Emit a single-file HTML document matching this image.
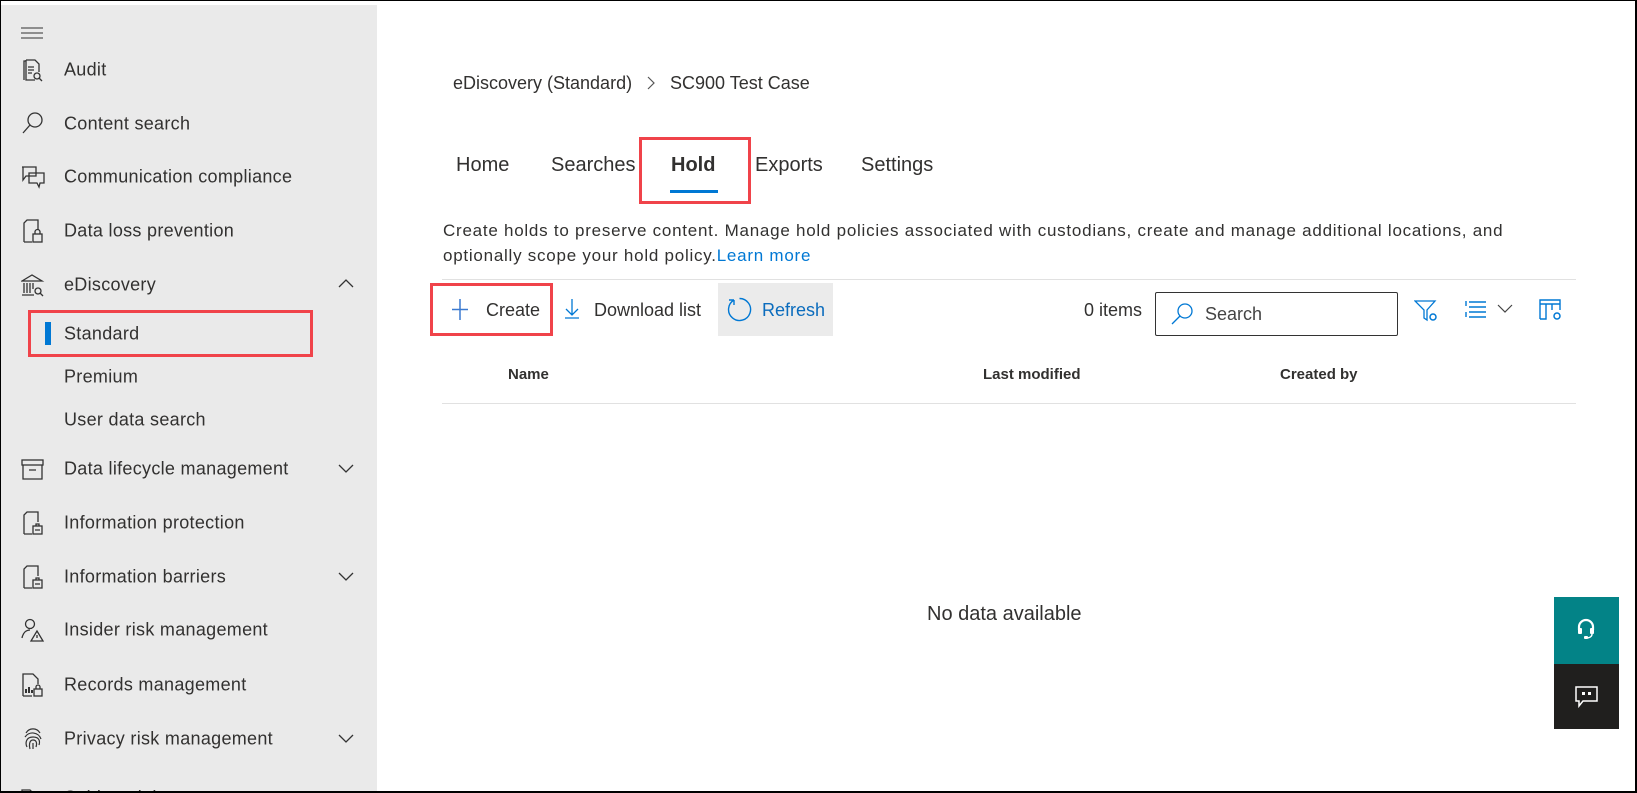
<!DOCTYPE html>
<html><head><meta charset="utf-8"><style>
*{margin:0;padding:0;box-sizing:border-box}
html{width:1637px;height:793px;overflow:hidden}
body{width:1637px;height:793px;overflow:hidden;background:#fff;font-family:"Liberation Sans",Arial,sans-serif;color:#323130;position:relative}
.frame{position:absolute;left:0;top:0;width:1637px;height:793px;border:1px solid #000;border-width:1px 2px 2px 1px;z-index:10;pointer-events:none}
.side{position:absolute;left:1px;top:5px;width:376px;height:788px;background:#eaeaea}
.it{position:absolute;left:64px;font-size:18px;letter-spacing:0.3px;white-space:nowrap;transform:translateY(-50%)}
.ic{position:absolute;left:21px;transform:translateY(-50%)}
.chev{position:absolute;left:338px;transform:translateY(-50%)}
.a{position:absolute;white-space:nowrap}
.red{position:absolute;border:3px solid #f0434a}
</style></head><body>
<div class="frame"></div>
<div class="side"></div>
<svg class="a" style="left:21px;top:27px" width="23" height="12"><path d="M0 1h22M0 6h22M0 11h22" stroke="#333" stroke-width="1"/></svg>

<svg class="ic" style="top:70px" width="24" height="24" viewBox="0 0 24 24" fill="none" stroke="#333" stroke-width="1.3"><path d="M3 22V3h2M5 2h9l4 4v8M5 2v20h9"/><path d="M7 9h6M7 12h6M7 15h4"/><circle cx="16" cy="18" r="3"/><path d="M18 20l3 3"/></svg>
<div class="it" style="top:70px">Audit</div>
<svg class="ic" style="top:123px" width="24" height="24" viewBox="0 0 24 24" fill="none" stroke="#333" stroke-width="1.3"><circle cx="14" cy="9" r="7"/><path d="M9 14L2 22"/></svg>
<div class="it" style="top:124px">Content search</div>
<svg class="ic" style="top:177px" width="24" height="24" viewBox="0 0 24 24" fill="none" stroke="#333" stroke-width="1.3"><path d="M1 2h14v9H5l-3 4V2"/><path d="M8 8h15v10h-4l-1 4-2-4H8z"/></svg>
<div class="it" style="top:177px">Communication compliance</div>
<svg class="ic" style="top:231px" width="24" height="24" viewBox="0 0 24 24" fill="none" stroke="#333" stroke-width="1.3"><path d="M3 23V4l3-3h11v10M3 23h8"/><rect x="12" y="15" width="9" height="8"/><path d="M14 15v-2a2.5 2.5 0 015 0v2"/></svg>
<div class="it" style="top:231px">Data loss prevention</div>
<svg class="ic" style="top:285px" width="24" height="24" viewBox="0 0 24 24" fill="none" stroke="#333" stroke-width="1.3"><path d="M1 8l10-6 10 6zM3 10v10M6 10v10M9 10v10M12 10v6M1 22h12"/><circle cx="17" cy="18" r="3"/><path d="M19 20l3 3"/></svg>
<div class="it" style="top:285px">eDiscovery</div>
<svg class="chev" style="top:283px" width="16" height="10"><path d="M1 9l7-7 7 7" stroke="#333" fill="none" stroke-width="1.3"/></svg>

<div class="red" style="left:28px;top:310px;width:285px;height:47px"></div>
<div class="a" style="left:45px;top:322px;width:6px;height:23px;background:#0078d4"></div>
<div class="it" style="top:334px">Standard</div>
<div class="it" style="top:377px">Premium</div>
<div class="it" style="top:420px">User data search</div>

<svg class="ic" style="top:469px" width="24" height="24" viewBox="0 0 24 24" fill="none" stroke="#333" stroke-width="1.3"><rect x="1" y="3" width="21" height="5"/><path d="M2 8v14h19V8M8 13h7"/></svg>
<div class="it" style="top:469px">Data lifecycle management</div>
<svg class="chev" style="top:469px" width="16" height="10"><path d="M1 1l7 7 7-7" stroke="#333" fill="none" stroke-width="1.3"/></svg>
<svg class="ic" style="top:523px" width="24" height="24" viewBox="0 0 24 24" fill="none" stroke="#333" stroke-width="1.3"><path d="M3 23V4l3-3h11v10M3 23h8"/><rect x="12" y="15" width="9" height="8"/><path d="M14 19h5M15 15v-2h3v2"/></svg>
<div class="it" style="top:523px">Information protection</div>
<svg class="ic" style="top:577px" width="24" height="24" viewBox="0 0 24 24" fill="none" stroke="#333" stroke-width="1.3"><path d="M3 23V4l3-3h11v10M3 23h8"/><rect x="12" y="15" width="9" height="8"/><path d="M14 19h5M15 15v-2h3v2"/></svg>
<div class="it" style="top:577px">Information barriers</div>
<svg class="chev" style="top:577px" width="16" height="10"><path d="M1 1l7 7 7-7" stroke="#333" fill="none" stroke-width="1.3"/></svg>
<svg class="ic" style="top:630px" width="24" height="24" viewBox="0 0 24 24" fill="none" stroke="#333" stroke-width="1.3"><circle cx="9" cy="6" r="4.5"/><path d="M1 20c1-5 4-8 8-8M16 13l-6 10h12z M16 17v3"/></svg>
<div class="it" style="top:630px">Insider risk management</div>
<svg class="ic" style="top:685px" width="24" height="24" viewBox="0 0 24 24" fill="none" stroke="#333" stroke-width="1.3"><path d="M2 23V1h10l5 5v5M2 23h9"/><path d="M5 20v-4M8 20v-6M11 20v-3" stroke-width="2"/><rect x="13" y="16" width="8" height="7"/><path d="M15 16v-2a2 2 0 014 0v2"/></svg>
<div class="it" style="top:685px">Records management</div>
<svg class="ic" style="top:739px" width="24" height="24" viewBox="0 0 24 24" fill="none" stroke="#333" stroke-width="1.2"><path d="M5 6a8 8 0 0114 0M4 10a9 9 0 0116 2M6 20c-2-4-1-10 6-10s7 5 6 8M9 22c-1-3-1-9 3-9s4 4 3 7M12 16v6"/></svg>
<div class="it" style="top:739px">Privacy risk management</div>
<svg class="chev" style="top:739px" width="16" height="10"><path d="M1 1l7 7 7-7" stroke="#333" fill="none" stroke-width="1.3"/></svg>
<svg class="ic" style="top:798px" width="24" height="24" viewBox="0 0 24 24" fill="none" stroke="#333" stroke-width="1.3"><path d="M1 4h8l2 2h11v16H1z"/></svg>
<div class="it" style="top:798px">Subject rights requests</div>

<div class="a" style="left:453px;top:73px;font-size:18px">eDiscovery (Standard)</div>
<svg class="a" style="left:647px;top:76px" width="9" height="14"><path d="M1 1l6 6-6 6" stroke="#555" fill="none" stroke-width="1.2"/></svg>
<div class="a" style="left:670px;top:73px;font-size:18px">SC900 Test Case</div>

<div class="a" style="left:456px;top:154px;font-size:20px">Home</div>
<div class="a" style="left:551px;top:154px;font-size:20px">Searches</div>
<div class="a" style="left:671px;top:154px;font-size:20px;font-weight:bold">Hold</div>
<div class="a" style="left:670px;top:190px;width:48px;height:3px;background:#0078d4"></div>
<div class="a" style="left:755px;top:154px;font-size:20px">Exports</div>
<div class="a" style="left:861px;top:154px;font-size:20px">Settings</div>
<div class="red" style="left:639px;top:137px;width:112px;height:67px"></div>

<div class="a" style="left:443px;top:218px;font-size:17px;letter-spacing:0.75px;line-height:25px">Create holds to preserve content. Manage hold policies associated with custodians, create and manage additional locations, and<br>optionally scope your hold policy.<span style="color:#0078d4">Learn more</span></div>
<div class="a" style="left:442px;top:279px;width:1134px;height:1px;background:#e1e1e1"></div>

<div class="a" style="left:718px;top:283px;width:115px;height:53px;background:#ebebeb"></div>
<svg class="a" style="left:452px;top:299px" width="16" height="21"><path d="M8 0v21M0 10.5h16" stroke="#3b7ad0" stroke-width="1.5"/></svg>
<div class="a" style="left:486px;top:300px;font-size:18px">Create</div>
<div class="red" style="left:430px;top:283px;width:123px;height:53px"></div>
<svg class="a" style="left:564px;top:299px" width="16" height="20"><path d="M8 0v15M2 10l6 6 6-6M1 19h14" stroke="#0078d4" fill="none" stroke-width="1.3"/></svg>
<div class="a" style="left:594px;top:300px;font-size:18px">Download list</div>
<svg class="a" style="left:727px;top:297px" width="25" height="25" viewBox="0 0 25 25"><path d="M7 3A11 11 0 1012.5 1.5M7 3V8M7 3H2" stroke="#0078d4" fill="none" stroke-width="1.4"/></svg>
<div class="a" style="left:762px;top:300px;font-size:18px;color:#0b6cbd">Refresh</div>

<div class="a" style="left:1084px;top:300px;font-size:18px">0 items</div>
<div class="a" style="left:1155px;top:292px;width:243px;height:44px;border:1px solid #333;border-radius:2px"></div>
<svg class="a" style="left:1170px;top:302px" width="24" height="24"><circle cx="15" cy="9" r="7" stroke="#0078d4" fill="none" stroke-width="1.3"/><path d="M10 14L2 22" stroke="#0078d4" stroke-width="1.3"/></svg>
<div class="a" style="left:1205px;top:304px;font-size:18px;color:#444">Search</div>
<svg class="a" style="left:1414px;top:300px" width="24" height="22"><path d="M1 1h20l-8 9v10l-3-2V10z" stroke="#0078d4" fill="none" stroke-width="1.3"/><circle cx="19" cy="17" r="3" fill="#fff" stroke="#0078d4" stroke-width="1.5"/></svg>
<svg class="a" style="left:1465px;top:300px" width="22" height="18"><path d="M1 1v5M1 12v5M4 2h17M4 7h17M4 12h17M4 17h17" stroke="#0078d4" stroke-width="1.4"/></svg>
<svg class="a" style="left:1497px;top:304px" width="16" height="9"><path d="M1 1l7 7 7-7" stroke="#444" fill="none" stroke-width="1.2"/></svg>
<svg class="a" style="left:1539px;top:299px" width="24" height="22"><path d="M1 20V1h20v10M1 5h20M7 5v15H1M13 5v6" stroke="#0078d4" fill="none" stroke-width="1.4"/><circle cx="18" cy="17" r="3" fill="#fff" stroke="#0078d4" stroke-width="1.5"/></svg>

<div class="a" style="left:508px;top:366px;font-size:15px;font-weight:bold">Name</div>
<div class="a" style="left:983px;top:366px;font-size:15px;font-weight:bold">Last modified</div>
<div class="a" style="left:1280px;top:366px;font-size:15px;font-weight:bold">Created by</div>
<div class="a" style="left:442px;top:403px;width:1134px;height:1px;background:#e1e1e1"></div>

<div class="a" style="left:927px;top:603px;font-size:20px">No data available</div>

<div class="a" style="left:1554px;top:597px;width:65px;height:67px;background:#038387"></div>
<svg class="a" style="left:1576px;top:618px" width="20" height="22" viewBox="0 0 20 22"><path d="M3 12V9a7 7 0 0114 0v3" stroke="#fff" fill="none" stroke-width="2.2"/><rect x="2" y="10" width="4" height="6" rx="1" fill="#fff"/><rect x="14" y="10" width="4" height="6" rx="1" fill="#fff"/><path d="M16 16c0 3-3 4-6 4" stroke="#fff" fill="none" stroke-width="1.5"/><rect x="8" y="18" width="4" height="3" rx="1" fill="#fff"/></svg>
<div class="a" style="left:1554px;top:664px;width:65px;height:65px;background:#201f1e"></div>
<svg class="a" style="left:1575px;top:686px" width="24" height="22"><path d="M1 1h21v14H8l-4 5v-5H1z" stroke="#fff" fill="none" stroke-width="1.5"/><rect x="7" y="6" width="3" height="3" fill="#fff"/><rect x="13" y="6" width="3" height="3" fill="#fff"/></svg>
</body></html>
